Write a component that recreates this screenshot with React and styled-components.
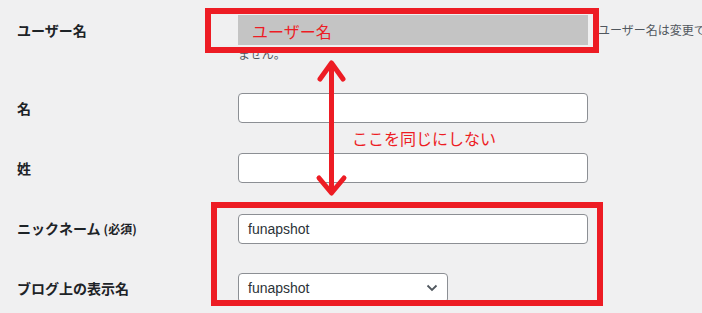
import React from "react";
import styled, { createGlobalStyle } from "styled-components";

const GlobalStyle = createGlobalStyle`
    html, body {
        margin: 0;
        padding: 0;
        background: #f0f0f1;
        overflow: hidden;
    }
`;

const RED = "#ed1c24";
const JP = `"Noto Sans CJK JP", "Noto Sans", sans-serif`;
const UI = `"Liberation Sans", "Noto Sans CJK JP", sans-serif`;

const Page = styled.main`
    position: relative;
    width: 702px;
    height: 313px;
    overflow: hidden;
    background: #f0f0f1;
    color: #1d2327;
`;

const FormTable = styled.div`
    padding-left: 17px;
    width: 720px;
`;

const Row = styled.div`
    display: grid;
    grid-template-columns: 221px 486px;
    align-items: ${(p) => (p.$top ? "start" : "center")};
    padding: 15px 0;
    height: ${(p) => (p.$top ? "auto" : "30px")};
`;

const Label = styled.div`
    font-family: ${JP};
    font-size: 14px;
    font-weight: 700;
    line-height: 30px;
    white-space: nowrap;
    small {
        font-size: 12px;
        font-weight: 600;
        margin-left: 3px;
    }
`;

const Field = styled.div`
    font-size: 0;
`;

const Locked = styled.div`
    display: inline-block;
    vertical-align: middle;
    box-sizing: border-box;
    width: 350px;
    height: 30px;
    padding-left: 14px;
    background: #c4c4c4;
    color: ${RED};
    font-family: ${JP};
    font-size: 16px;
    line-height: 32px;
`;

const Description = styled.span`
    margin-left: 10px;
    font-family: ${JP};
    font-size: 12px;
    line-height: 18px;
    color: #50575e;
    vertical-align: middle;
`;

const TextInput = styled.div`
    box-sizing: border-box;
    width: ${(p) => p.$width || 350}px;
    height: 30px;
    padding: 0 9px;
    background: #fff;
    border: 1px solid #8c8f94;
    border-radius: 4px;
    font-family: ${UI};
    font-size: 14px;
    line-height: 28px;
    color: #2c3338;
`;

const Select = styled(TextInput)`
    display: flex;
    align-items: center;
    justify-content: space-between;
    padding-right: 9px;
    svg {
        display: block;
    }
`;

const Frame = styled.div`
    position: absolute;
    box-sizing: border-box;
    left: ${(p) => p.$x}px;
    top: ${(p) => p.$y}px;
    width: ${(p) => p.$w}px;
    height: ${(p) => p.$h}px;
    border: 6px solid ${RED};
    pointer-events: none;
`;

const Note = styled.div`
    position: absolute;
    left: 352px;
    top: 127px;
    font-family: ${JP};
    font-size: 16px;
    line-height: 22px;
    color: ${RED};
    white-space: nowrap;
`;

const ArrowLayer = styled.svg`
    position: absolute;
    left: 0;
    top: 0;
    pointer-events: none;
`;

function Chevron() {
    return (
        <svg width="12" height="8" viewBox="0 0 12 8">
            <path d="M1.5 1.5 L6 6 L10.5 1.5" fill="none" stroke="#50575e" strokeWidth="1.8" />
        </svg>
    );
}

export default function App() {
    return (
        <Page>
            <GlobalStyle />
            <FormTable>
                <Row $top>
                    <Label>ユーザー名</Label>
                    <Field>
                        <Locked>ユーザー名</Locked>
                        <Description>ユーザー名は変更できません。</Description>
                    </Field>
                </Row>
                <Row>
                    <Label>名</Label>
                    <TextInput />
                </Row>
                <Row>
                    <Label>姓</Label>
                    <TextInput />
                </Row>
                <Row>
                    <Label>
                        ニックネーム<small>(必須)</small>
                    </Label>
                    <TextInput>funapshot</TextInput>
                </Row>
                <Row>
                    <Label>ブログ上の表示名</Label>
                    <Select $width={210}>
                        funapshot
                        <Chevron />
                    </Select>
                </Row>
            </FormTable>

            {/* annotations drawn over the form */}
            <Frame $x={205} $y={8} $w={394} $h={45} />
            <Frame $x={211} $y={202} $w={392} $h={104} />
            <ArrowLayer width="702" height="313">
                <g stroke={RED} strokeWidth="5" fill="none" strokeLinecap="round" strokeLinejoin="round">
                    <line x1="331.5" y1="64" x2="331.5" y2="192" />
                    <polyline points="320,79 331.5,63 343,79" />
                    <polyline points="319,178 331.5,193 344,178" />
                </g>
            </ArrowLayer>
            <Note>ここを同じにしない</Note>
        </Page>
    );
}
